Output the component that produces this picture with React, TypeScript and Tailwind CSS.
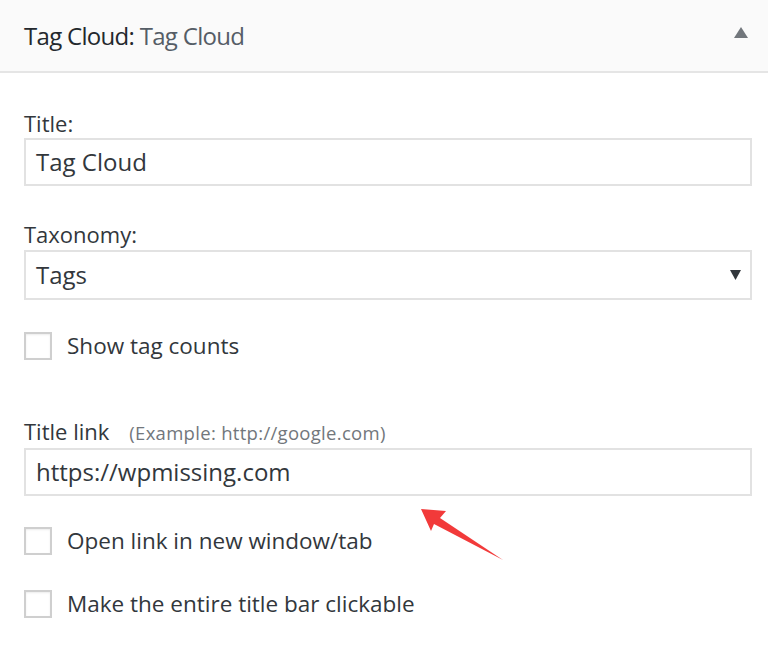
import React from 'react';

function Checkbox({ label }: { label: string }) {
  return (
    <label className="flex items-center gap-[15px]">
      <span className="block h-[28px] w-[28px] shrink-0 border-2 border-[#cfcfcf] bg-white shadow-[inset_0_1px_2px_rgba(0,0,0,0.08)]" />
      <span className="text-[22.5px] leading-none text-[#32373c]">{label}</span>
    </label>
  );
}

function TextBox({ value }: { value: string }) {
  return (
    <div className="flex h-[48px] items-center border-2 border-[#e2e2e2] bg-white pl-[10px] text-[24px] text-[#32373c]">
      {value}
    </div>
  );
}

export default function App() {
  return (
    <div
      className="relative h-[645px] w-[768px] overflow-hidden bg-white"
      style={{ fontFamily: '"Open Sans", "Noto Sans", sans-serif' }}
    >
      <div className="flex h-[73px] items-center justify-between border-b-2 border-[#e5e5e5] bg-[#fafafa] pl-6 pr-[20px]">
        <h3 className="text-[24px] tracking-[-0.7px] text-[#23282d]">
          <span className="font-medium">Tag Cloud:</span> <span className="text-[#555d66]">Tag Cloud</span>
        </h3>
        <svg width="14" height="11" viewBox="0 0 14 11" className="mb-[7px]">
          <polygon points="7,0 14,11 0,11" fill="#72777c" />
        </svg>
      </div>

      <div className="flex flex-col pl-6 pr-4">
        <p className="mt-[38px] text-[22px] leading-[24px] text-[#32373c]">Title:</p>
        <div className="mt-[3px]">
          <TextBox value="Tag Cloud" />
        </div>

        <p className="mt-[36px] text-[22px] leading-[24px] text-[#32373c]">Taxonomy:</p>
        <div className="mt-[4px] flex h-[50px] items-center justify-between border-2 border-[#e2e2e2] bg-white pl-[10px] pr-[9px] text-[24px] text-[#32373c]">
          <span>Tags</span>
          <svg width="11" height="10" viewBox="0 0 11 10">
            <polygon points="0,0 11,0 5.5,10" fill="#32373c" />
          </svg>
        </div>

        <div className="mt-[32px]">
          <Checkbox label="Show tag counts" />
        </div>

        <p className="mt-[58px] flex items-baseline text-[22px] leading-[26px] text-[#32373c]">
          Title link
          <span className="ml-[20px] text-[18.5px] tracking-[0.3px] text-[#72777c]">(Example: http://google.com)</span>
        </p>
        <div className="mt-[2px]">
          <TextBox value="https://wpmissing.com" />
        </div>

        <div className="mt-[31px]">
          <Checkbox label="Open link in new window/tab" />
        </div>
        <div className="mt-[35px]">
          <Checkbox label="Make the entire title bar clickable" />
        </div>
      </div>

      <svg
        className="absolute left-[415px] top-[503px]"
        width="95"
        height="62"
        viewBox="415 503 95 62"
      >
        <polygon points="421,509 446,511 440,518 503,560 434,524 431,531" fill="#f23a3a" />
      </svg>
    </div>
  );
}
